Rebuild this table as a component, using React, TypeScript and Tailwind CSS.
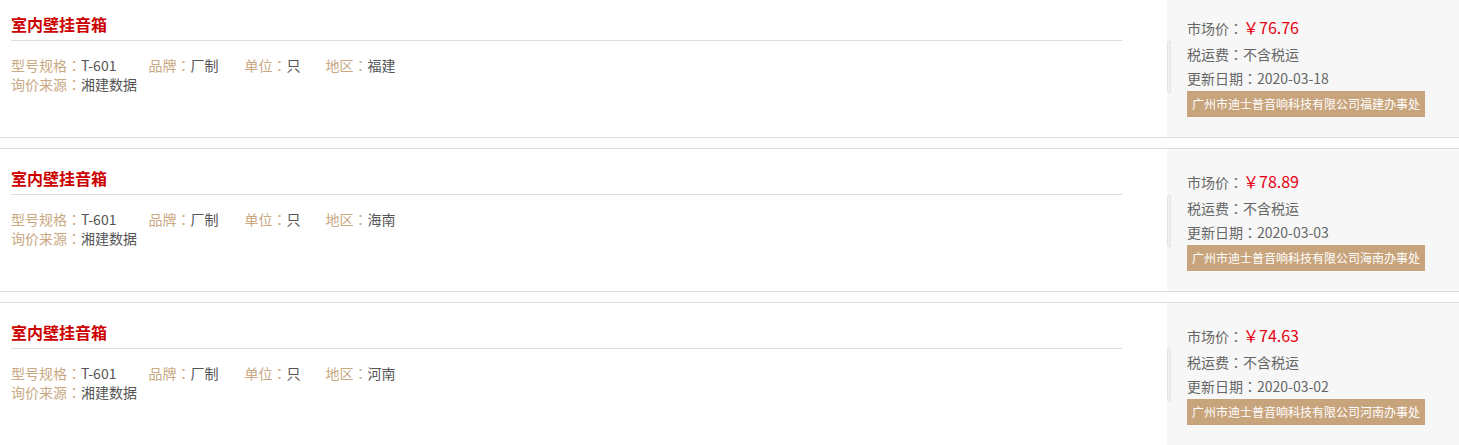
const items = [
  { region: "福建", price: "76.76", date: "2020-03-18" },
  { region: "海南", price: "78.89", date: "2020-03-03" },
  { region: "河南", price: "74.63", date: "2020-03-02" },
];

const font = { fontFamily: '"Microsoft YaHei", "Noto Sans CJK SC", "Liberation Sans", sans-serif' };

// centred full-width colon (the SC face puts it at the left of its box)
const Colon = () => <span className="font-['Noto_Sans_CJK_TC',sans-serif]">：</span>;

function Field({ label, value, className }: { label: string; value: string; className?: string }) {
  return (
    <span className={className}>
      <span className="text-[#c9a882]">
        {label}
        <Colon />
      </span>
      <span className="text-[#555]">{value}</span>
    </span>
  );
}

function Card({ region, price, date }: { region: string; price: string; date: string }) {
  return (
    <div className="flex h-[144px] border-y border-[#dddddd] bg-white mb-[10px]">
      <div className="flex-1 pl-[11px] pr-[45px]">
        <div className="pt-[17px] pb-[4px] border-b border-[#dddddd] text-[16px] leading-[24px] font-bold text-[#cc0000]">
          室内壁挂音箱
        </div>
        <div className="pt-[15px] text-[14px] leading-[19px]">
          <div className="flex">
            <Field label="型号规格" value="T-601" className="mr-[32px]" />
            <Field label="品牌" value="厂制" className="mr-[26px]" />
            <Field label="单位" value="只" className="mr-[25px]" />
            <Field label="地区" value={region} />
          </div>
          <Field label="询价来源" value="湘建数据" />
        </div>
      </div>
      <div className="w-[292px] bg-[#f7f7f7] flex items-center">
        <div className="w-[4px] h-[52px] rounded-full border border-[#e3e3e3] bg-[#efefef] mt-[2px]" />
        <div className="self-start pt-[18px] pl-[16px] text-[14px] text-[#666]">
          <div className="leading-[28px]">
            市场价<Colon />
            <span className="text-[16px] text-[#e60012]">￥{price}</span>
          </div>
          <div className="leading-[24px]">
            税运费<Colon />不含税运
          </div>
          <div className="leading-[24px]">
            更新日期<Colon />
            {date}
          </div>
          <div className="inline-block mt-[1px] bg-[#c8a47c] px-[5px] text-[12px] leading-[26px] text-white">
            广州市迪士普音响科技有限公司{region}办事处
          </div>
        </div>
      </div>
    </div>
  );
}

export default function App() {
  return (
    <div className="w-[1459px] h-[445px] overflow-hidden bg-white" style={font}>
      <div className="-mt-[6px]">
        {items.map((it) => (
          <Card key={it.region} {...it} />
        ))}
      </div>
    </div>
  );
}
